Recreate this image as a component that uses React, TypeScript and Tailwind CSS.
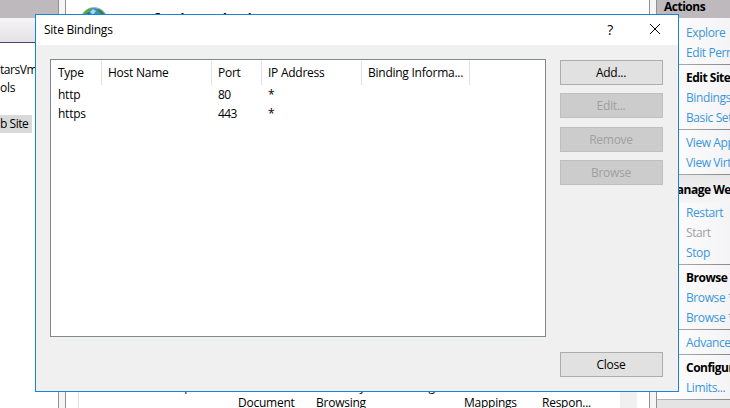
import React from "react";

const ui = "font-['Open_Sans','Noto_Sans',sans-serif] text-[12px] leading-[16px] tracking-[-0.25px] whitespace-nowrap";

function Button({ label, disabled = false }: { label: string; disabled?: boolean }) {
  return (
    <button
      disabled={disabled}
      className={`flex h-[25px] w-[103px] items-center justify-center border pr-px ${
        disabled ? "border-[#bfbfbf] bg-[#cccccc] text-[#a0a0a0]" : "border-[#adadad] bg-[#e1e1e1] text-black"
      }`}
    >
      {label}
    </button>
  );
}

function Rule() {
  return <div className="h-px shrink-0 bg-gradient-to-r from-[#b8b8b8] to-[#8a8a8a]" />;
}

function Action({ label, muted = false }: { label: string; muted?: boolean }) {
  return (
    <div className={`h-5 pl-[29px] leading-5 tracking-[-0.4px] ${muted ? "text-[#a0a0a0]" : "text-[#3a96dd]"}`}>
      {label}
    </div>
  );
}

function Heading({ label }: { label: string }) {
  return <div className="h-5 pl-[29px] leading-5 font-bold tracking-[-0.5px] text-black">{label}</div>;
}

function Globe() {
  return (
    <svg className="mt-[7px] ml-[14px] shrink-0" width="28" height="28" viewBox="0 0 28 28">
      <circle cx="14" cy="14" r="13.5" fill="#3c8fc6" stroke="#9fb9c4" />
      <path d="M2 9Q6 1 13 1L11 3 8 5 5 8Z" fill="#54b02d" />
      <path d="M17 2L21 3 26 9 22 8 19 5Z" fill="#398836" />
      <path d="M10 5L13 2 16 4 13 8Z" fill="#a5d8ea" />
      <path d="M5 8L9 5 10 7 7 10Z" fill="#2c5f9e" />
    </svg>
  );
}

function Tree() {
  return (
    <div className="flex w-[58px] shrink-0 flex-col overflow-hidden bg-white text-black">
      <div className="h-[18px] bg-[#bdb9bd]" />
      <div className="h-6 bg-gradient-to-b from-[#f6f5f6] to-[#e4e2e4]" />
      <div className="h-px bg-[#4a4568]" />
      <div className="mt-[18px] h-[18px] leading-[18px] tracking-[-0.45px]">tarsVm</div>
      <div className="h-[18px] leading-[18px]">ols</div>
      <div className="mt-[18px] h-[18px] w-8 bg-[#d9d9d9] leading-[18px] tracking-[-0.45px]">b Site</div>
    </div>
  );
}

const features = [
  { top: "Compression", bottom: "", width: "w-[79px]" },
  { top: "Default", bottom: "Document", width: "w-[78px]" },
  { top: "Directory", bottom: "Browsing", width: "w-[69px]" },
  { top: "Error Pages", bottom: "", width: "w-[79px]" },
  { top: "Handler", bottom: "Mappings", width: "w-[78px]" },
  { top: "HTTP", bottom: "Respon...", width: "w-[78px]" },
];

function Features() {
  return (
    <div className="flex min-w-0 flex-1 flex-col overflow-hidden bg-white">
      <div className="flex h-[378px]">
        <Globe />
        <span className="mt-[8px] ml-[22px] text-[17.5px] leading-6 font-semibold tracking-[-0.1px] text-black">
          Default Web Site Home
        </span>
      </div>
      <div className="flex h-[30px] text-black">
        <div className="ml-3 w-px bg-[#dddddd]" />
        <div className="flex flex-1 pl-[80px]">
          {features.map((f) => (
            <div key={f.top} className={`${f.width} shrink-0`}>
              <div className="h-4 leading-[17px]">{f.top}</div>
              <div className="h-4 leading-[17px]">{f.bottom}</div>
            </div>
          ))}
        </div>
        <div className="mr-3 w-[17px] shrink-0 bg-[#f0f0f0]" />
      </div>
    </div>
  );
}

function Splitter() {
  return <div className="w-2 shrink-0 border-x border-[#929292] bg-[#f5f5f5]" />;
}

function Actions() {
  return (
    <div className="flex w-[73px] shrink-0 flex-col overflow-hidden bg-gradient-to-r from-white to-[#f4f4f6]">
      <div className="h-[18px] shrink-0 bg-[#bdb9bd] pl-[7px] leading-[14px] font-bold tracking-[-0.5px]">Actions</div>
      <div className="h-[46px] pt-[5px]"><Action label="Explore" /><Action label="Edit Permissions..." /></div>
      <Rule />
      <div className="h-[64px] pt-[3px]"><Heading label="Edit Site" /><Action label="Bindings..." /><Action label="Basic Settings..." /></div>
      <Rule />
      <div className="h-[44px] pt-[3px]"><Action label="View Applications" /><Action label="View Virtual Directories" /></div>
      <Rule />
      <div className="h-[89px]">
        <div className="h-[28px] bg-gradient-to-b from-[#e8e7e8] to-[#f6f6f7] pt-[5px] pl-[9px] leading-5 font-bold tracking-[-0.5px]">Manage Website</div>
        <Action label="Restart" /><Action label="Start" muted /><Action label="Stop" />
      </div>
      <Rule />
      <div className="h-[64px] pt-[3px]"><Heading label="Browse Website" /><Action label="Browse *:80 (http)" /><Action label="Browse *:443 (https)" /></div>
      <Rule />
      <div className="h-[24px] pt-[3px]"><Action label="Advanced Settings..." /></div>
      <Rule />
      <div className="h-[44px] pt-[3px]"><Heading label="Configure" /><Action label="Limits..." /></div>
      <Rule />
      <div className="flex-1 bg-[#e5e4e5]" />
    </div>
  );
}

const columns = [
  { label: "Type", width: "w-[50px]" },
  { label: "Host Name", width: "w-[110px]" },
  { label: "Port", width: "w-[50px]" },
  { label: "IP Address", width: "w-[100px]" },
  { label: "Binding Informa...", width: "w-[108px]" },
];

function Bindings() {
  return (
    <div className="h-[278px] w-[496px] border border-[#828790] bg-white pt-px pl-px">
      <div className="flex h-6">
        {columns.map((c) => (
          <div key={c.label} className={`${c.width} border-r border-[#e2e2e2] pl-[6px] leading-6`}>{c.label}</div>
        ))}
      </div>
      {[["http", "80"], ["https", "443"]].map(([type, port]) => (
        <div key={type} className="flex h-[19px] leading-[19px]">
          <div className="w-[160px] pl-[6px]">{type}</div>
          <div className="w-[50px] pl-[6px] tracking-[-0.6px]">{port}</div>
          <div className="pl-[6px]">*</div>
        </div>
      ))}
    </div>
  );
}

function Dialog() {
  return (
    <div className="absolute top-[14px] left-[35px] flex h-[378px] w-[644px] flex-col border border-[#1883d7] bg-[#f0f0f0] text-black">
      <div className="flex h-[30px] shrink-0 bg-white pl-2">
        <span className="flex-1 leading-[30px]">Site Bindings</span>
        <span className="mr-[36px] text-[14px] leading-[29px]">?</span>
        <svg className="mt-[8px] mr-[17px]" width="12" height="12" viewBox="0 0 12 12" fill="none" stroke="#000">
          <path d="M1 1L11 11M11 1L1 11" />
        </svg>
      </div>
      <div className="flex flex-1 gap-[14px] pt-[14px] pl-[14px]">
        <Bindings />
        <div className="flex flex-col pt-px">
          <Button label="Add..." />
          <div className="mt-2"><Button label="Edit..." disabled /></div>
          <div className="mt-[9px]"><Button label="Remove" disabled /></div>
          <div className="mt-2"><Button label="Browse" disabled /></div>
          <div className="mt-[167px]"><Button label="Close" /></div>
        </div>
      </div>
    </div>
  );
}

export default function App() {
  return (
    <div className={`relative flex h-[408px] w-[730px] overflow-hidden bg-white ${ui}`}>
      <Tree />
      <Splitter />
      <Features />
      <Splitter />
      <Actions />
      <Dialog />
    </div>
  );
}
